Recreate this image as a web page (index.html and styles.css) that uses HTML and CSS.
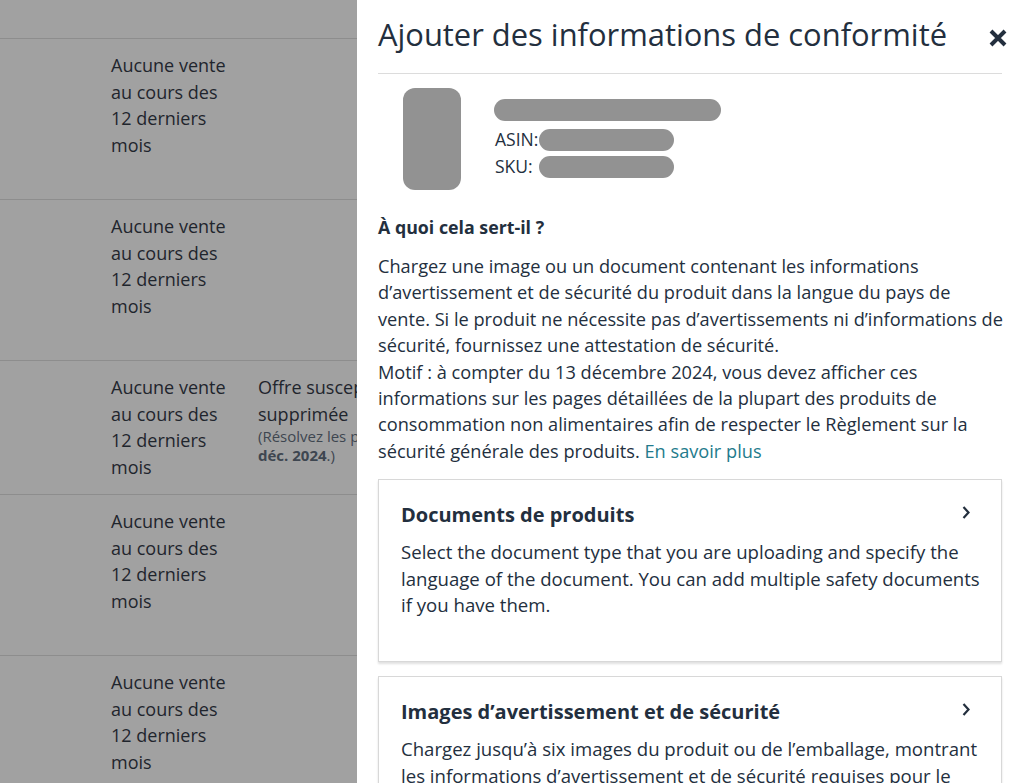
FILE: index.html
```html
<!DOCTYPE html>
<html lang="fr">
<head>
<meta charset="utf-8">
<title>Ajouter des informations de conformité</title>
<link rel="stylesheet" href="styles.css">
</head>
<body>
<div class="page">
  <div class="backdrop">
    <div class="row row-top"></div>
    <div class="row row-tall">
      <div class="cell-sales">Aucune vente<br>au cours des<br>12 derniers<br>mois</div>
    </div>
    <div class="row row-tall">
      <div class="cell-sales">Aucune vente<br>au cours des<br>12 derniers<br>mois</div>
    </div>
    <div class="row">
      <div class="cell-sales">Aucune vente<br>au cours des<br>12 derniers<br>mois</div>
      <div class="cell-status">
        <div class="status-main">Offre susceptible d’être</div>
        <div class="status-main">supprimée</div>
        <div class="status-note">(Résolvez les problèmes avant le 13</div>
        <div class="status-note"><b>déc. 2024</b>.)</div>
      </div>
    </div>
    <div class="row row-tall">
      <div class="cell-sales">Aucune vente<br>au cours des<br>12 derniers<br>mois</div>
    </div>
    <div class="row row-tall">
      <div class="cell-sales">Aucune vente<br>au cours des<br>12 derniers<br>mois</div>
    </div>
  </div>

  <aside class="panel">
    <header class="panel-header">
      <h1 class="panel-title">Ajouter des informations de conformité</h1>
      <button class="close" aria-label="Fermer">
        <svg width="20" height="20" viewBox="0 0 20 20"><path d="M3 3 L17 17 M17 3 L3 17" stroke="#232f3e" stroke-width="4" stroke-linecap="butt" fill="none"/></svg>
      </button>
    </header>

    <div class="product">
      <div class="thumb"></div>
      <div class="product-info">
        <div class="redact redact-name"></div>
        <div class="id-line"><span class="id-label">ASIN:</span><span class="redact redact-id"></span></div>
        <div class="id-line"><span class="id-label">SKU:</span><span class="redact redact-id"></span></div>
      </div>
    </div>

    <h2 class="section-title">À quoi cela sert-il ?</h2>
    <p class="desc">Chargez une image ou un document contenant les informations d’avertissement et de sécurité du produit dans la langue du pays de <span class="nowrap">vente. Si le</span> produit ne nécessite pas d’avertissements ni d’informations de sécurité, fournissez une attestation de sécurité.<br>Motif : à compter du 13 décembre 2024, vous devez afficher ces informations sur les pages détaillées de la plupart des produits de consommation non alimentaires afin de respecter le Règlement sur la sécurité générale des produits. <a href="#" class="link">En savoir plus</a></p>

    <div class="card card-docs">
      <div class="card-head">
        <h3 class="card-title">Documents de produits</h3>
        <svg class="chev" width="10" height="15" viewBox="0 0 10 15"><path d="M2.5 2 L7.5 7.5 L2.5 13" stroke="#232f3e" stroke-width="2.2" fill="none"/></svg>
      </div>
      <p class="card-text">Select the document type that you are uploading and specify the language of the document. You can add multiple safety documents if you have them.</p>
    </div>

    <div class="card">
      <div class="card-head">
        <h3 class="card-title">Images d’avertissement et de sécurité</h3>
        <svg class="chev" width="10" height="15" viewBox="0 0 10 15"><path d="M2.5 2 L7.5 7.5 L2.5 13" stroke="#232f3e" stroke-width="2.2" fill="none"/></svg>
      </div>
      <p class="card-text">Chargez jusqu’à six images du produit ou de l’emballage, montrant les informations d’avertissement et de sécurité requises pour le produit.</p>
    </div>
  </aside>
</div>
</body>
</html>
```

FILE: styles.css
```css
* { box-sizing: border-box; }
html, body {
  margin: 0;
  padding: 0;
  width: 1024px;
  height: 783px;
  overflow: hidden;
  font-family: "Open Sans", "Noto Sans", sans-serif;
  color: #232f3e;
}
.page {
  display: flex;
  width: 1024px;
  height: 783px;
}
.backdrop {
  width: 357px;
  flex: none;
  background: #a1a1a1;
  overflow: hidden;
  font-size: 18px;
  line-height: 26.5px;
  color: #1f252d;
}
.row {
  display: flex;
  border-bottom: 1px solid #8d8d8d;
  padding: 13px 0 14px 111px;
  gap: 32px;
}
.row-top { height: 39px; padding: 0; }
.row-tall { min-height: 161px; }
.cell-sales { width: 115px; flex: none; white-space: nowrap; }
.cell-status { white-space: nowrap; }
.status-note { font-size: 15px; line-height: 19px; color: #3e4650; }
.status-note b { font-weight: 700; }

.panel {
  flex: 1;
  background: #fff;
  padding: 0 22px 0 21px;
  overflow: hidden;
}
.panel-header {
  display: flex;
  align-items: center;
  justify-content: space-between;
  height: 74px;
  border-bottom: 1px solid #dcdcdc;
  padding-bottom: 5px;
}
.panel-title {
  margin: 0;
  font-size: 30.9px;
  font-weight: 400;
  white-space: nowrap;
}
.close {
  border: 0;
  background: none;
  padding: 0;
  margin-right: -6px;
  margin-top: 7px;
  width: 20px;
  height: 20px;
  display: block;
  flex: none;
}
.close svg { display: block; }

.product {
  display: flex;
  gap: 33px;
  padding: 14px 0 0 25px;
}
.thumb {
  width: 58px;
  height: 102px;
  border-radius: 12px;
  background: #929292;
}
.product-info {
  padding-top: 11px;
  font-size: 17.5px;
  line-height: 27px;
}
.redact {
  display: inline-block;
  background: #929292;
  border-radius: 12px;
  height: 22px;
}
.redact-name { display: block; width: 227px; margin-bottom: 5px; }
.id-line { display: flex; align-items: center; height: 27px; }
.id-label { width: 45px; flex: none; padding-left: 1px; }
.redact-id { width: 135px; }

.section-title {
  margin: 25px 0 0;
  font-size: 17.8px;
  font-weight: 700;
  line-height: 24px;
}
.desc {
  margin: 14px -6px 0 0;
  font-size: 18.2px;
  line-height: 26.4px;
}
.nowrap { white-space: nowrap; }
.link { color: #237b8c; text-decoration: none; }

.card {
  border: 1px solid #d8d8d8;
  box-shadow: 0 2px 2px rgba(0,0,0,0.12);
  padding: 21px 14px 0 22px;
  margin-top: 14px;
}
.card-docs { margin-top: 15px; height: 183px; }
.card-head {
  display: flex;
  align-items: center;
  justify-content: space-between;
}
.card-title {
  margin: 0;
  font-size: 20px;
  font-weight: 700;
  line-height: 28px;
}
.chev { display: block; margin: -6px 16px 0 0; flex: none; }
.card-text {
  margin: 10px 0 0;
  font-size: 18.6px;
  line-height: 26.5px;
}
```
